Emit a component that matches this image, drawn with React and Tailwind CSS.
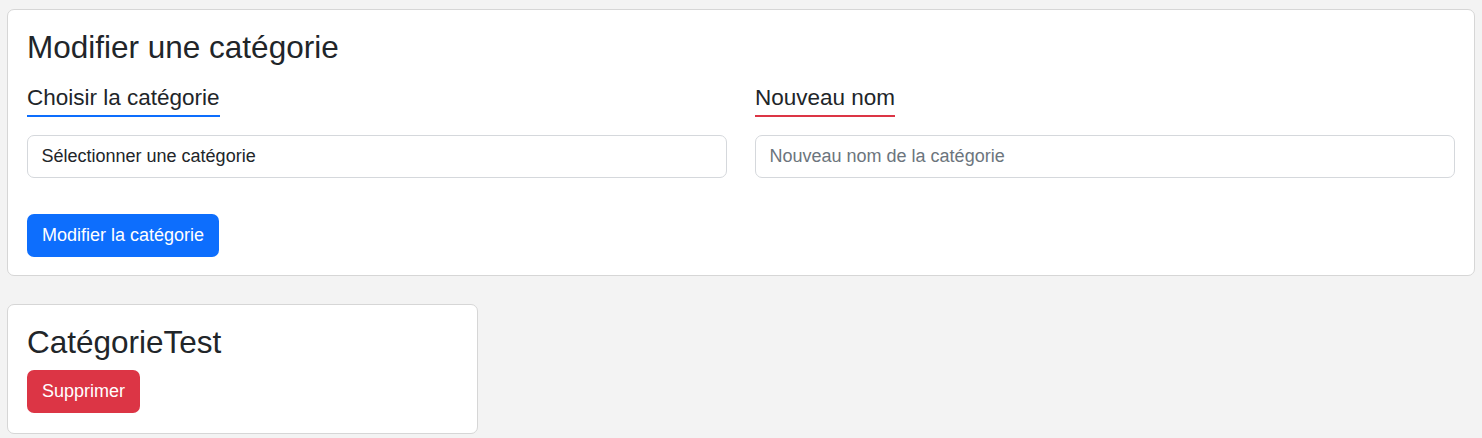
import React from "react";

const FieldTitle = ({ children, lineClass }) => (
  <div className="inline-block">
    <h5 className="text-[22.5px] leading-[27px]">{children}</h5>
    <div className={`mt-[4px] h-[1.5px] ${lineClass}`} />
  </div>
);

const App = () => {
  return (
    <div className="min-h-screen bg-[#f3f3f3] px-[7px] pt-[9px] pb-4 font-['Liberation_Sans',Arial,sans-serif] text-[#212529]">
      {/* Edit form */}
      <div className="bg-white border border-[#d6d6d6] rounded-[7px] px-[19px] pt-[18px] pb-[18px]">
        <h3 className="text-[31.5px] leading-[38px]">Modifier une catégorie</h3>

        <div className="grid grid-cols-2 gap-x-[28px] mt-[18px]">
          <div>
            <FieldTitle lineClass="bg-[#0d6efd]">Choisir la catégorie</FieldTitle>
            <select className="appearance-none block w-full mt-[18px] h-[43px] px-[13.5px] text-[18px] bg-white border border-[#d5d8dc] rounded-[7px] outline-none">
              <option>Sélectionner une catégorie</option>
            </select>
          </div>
          <div>
            <FieldTitle lineClass="bg-[#dc3545]">Nouveau nom</FieldTitle>
            <input
              type="text"
              placeholder="Nouveau nom de la catégorie"
              className="block w-full mt-[18px] h-[43px] px-[13.5px] text-[18px] bg-white border border-[#d5d8dc] rounded-[7px] outline-none placeholder:text-[#6c757d]"
            />
          </div>
        </div>

        <button className="mt-9 h-[43px] px-[15px] text-[18px] text-white bg-[#0d6efd] rounded-[7px]">
          Modifier la catégorie
        </button>
      </div>

      {/* Category list */}
      <div className="mt-[28px] w-[471px] bg-white border border-[#d6d6d6] rounded-[7px] px-[19px] pt-[18px] pb-[20px]">
        <h3 className="text-[31.5px] leading-[38px]">CatégorieTest</h3>
        <button className="mt-[9px] h-[43px] px-[15px] text-[18px] text-white bg-[#dc3545] rounded-[7px]">
          Supprimer
        </button>
      </div>
    </div>
  );
};

export default App;
